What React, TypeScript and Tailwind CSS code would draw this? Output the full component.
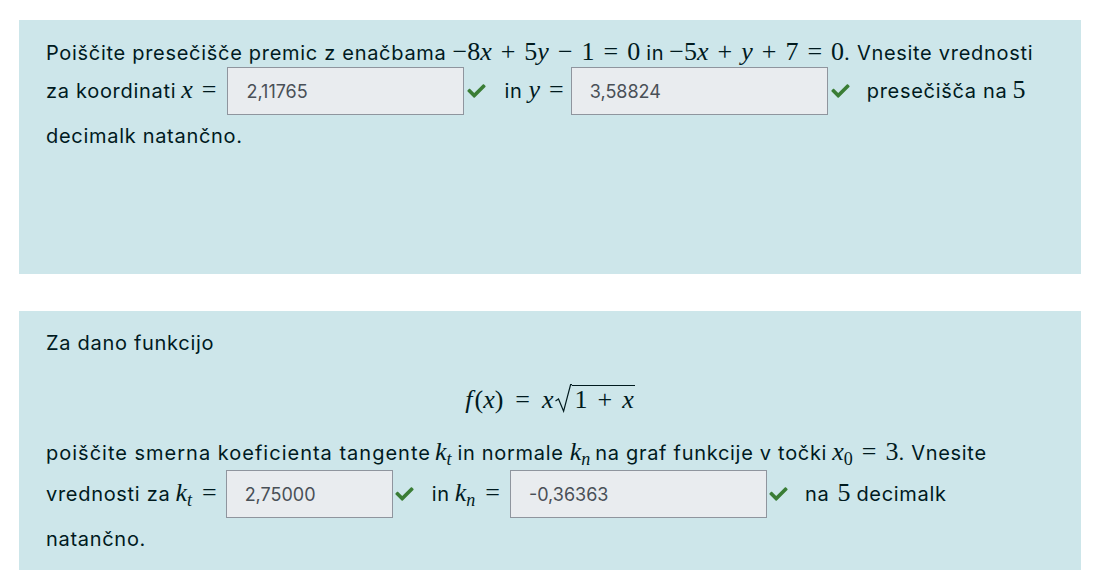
import type { ReactNode } from 'react';

// math set in a Times-like face, standing in for the TeX fonts
function M({ children, className = '' }: { children: ReactNode; className?: string }) {
  return (
    <span className={`font-['Liberation_Serif',serif] text-[26px] leading-none tracking-normal whitespace-nowrap ${className}`}>
      {children}
    </span>
  );
}

function V({ children }: { children: ReactNode }) {
  return <i className="italic">{children}</i>;
}

function Op({ children, gap = 'mx-[9px]' }: { children: ReactNode; gap?: string }) {
  return <span className={gap}>{children}</span>;
}

function Sub({ children, italic = true }: { children: ReactNode; italic?: boolean }) {
  return <span className={`relative top-[5px] text-[18px] ${italic ? 'italic' : ''}`}>{children}</span>;
}

function T({ children, className = '' }: { children: ReactNode; className?: string }) {
  return <span className={`whitespace-nowrap ${className}`}>{children}</span>;
}

function Check({ className = '' }: { className?: string }) {
  return (
    <svg viewBox="0 60 512 392" className={`w-[19px] h-[14px] flex-none ${className}`} aria-label="Pravilno">
      <path
        fill="#3a7d35"
        d="M173.898 439.404l-166.4-166.4c-9.997-9.997-9.997-26.206 0-36.204l36.203-36.204c9.997-9.998 26.207-9.998 36.204 0L192 312.69 432.095 72.596c9.997-9.997 26.207-9.997 36.204 0l36.203 36.204c9.997 9.997 9.997 26.206 0 36.204l-294.4 294.401c-9.998 9.997-26.207 9.997-36.204-.001z"
      />
    </svg>
  );
}

function Answer({ value, width, className = '' }: { value: string; width: string; className?: string }) {
  return (
    <input
      readOnly
      value={value}
      className={`${width} h-[48px] flex-none border border-[#8f959e] bg-[#e9ecef] pl-[18px] font-['Inter'] text-[18px] tracking-normal text-[#495057] outline-none ${className}`}
    />
  );
}

export default function App() {
  return (
    <div className="min-h-screen bg-white pl-[19px] pt-[20px] font-['Inter',sans-serif] text-[20px] tracking-[0.7px] text-[#001a1e]">
      {/* first question */}
      <div className="w-[1062px] h-[254px] bg-[#cde6ea] pl-[27px] pt-[18px]">
        <div className="flex items-baseline leading-[30px]">
          <T>Poiščite presečišče premic z enačbama</T>
          <M className="ml-[6px]">
            −8<V>x</V>
            <Op>+</Op>5<V>y</V>
            <Op>−</Op>1<Op>=</Op>0
          </M>
          <T className="ml-[6px]">in</T>
          <M className="ml-[5px]">
            −5<V>x</V>
            <Op>+</Op>
            <V>y</V>
            <Op>+</Op>7<Op>=</Op>0
          </M>
          <T>. Vnesite vrednosti</T>
        </div>
        <div className="flex items-center h-[48px] mt-[-1px]">
          <span className="flex items-baseline leading-[24px] pb-[2px]">
            <T>za koordinati</T>
            <M className="ml-[5px]">
              <V>x</V>
              <span className="ml-[9px]">=</span>
            </M>
          </span>
          <Answer value="2,11765" width="w-[237px]" className="ml-[11px]" />
          <Check className="ml-[3px]" />
          <span className="flex items-baseline leading-[24px] pb-[2px] ml-[18px]">
            <T>in</T>
            <M className="ml-[6px]">
              <V>y</V>
              <span className="ml-[9px]">=</span>
            </M>
          </span>
          <Answer value="3,58824" width="w-[257px]" className="ml-[7px]" />
          <Check className="ml-[3px]" />
          <span className="flex items-baseline leading-[24px] pb-[2px] ml-[17px]">
            <T>presečišča na</T>
            <M className="ml-[5px]">5</M>
          </span>
        </div>
        <div className="leading-[30px] mt-[6px]">
          <T>decimalk natančno.</T>
        </div>
      </div>

      {/* second question */}
      <div className="w-[1062px] h-[259px] mt-[37px] bg-[#cde6ea] pl-[27px] pt-[17px]">
        <div className="leading-[30px]">
          <T>Za dano funkcijo</T>
        </div>
        <div className="leading-[30px] mt-[26px] text-center pr-[27px]">
          <M>
            <span className="mr-[2px]">
              <V>f</V>
            </span>
            (<V>x</V>)<Op gap="mx-[12px]">=</Op>
            <V>x</V>
            <svg viewBox="0 0 17 29" className="inline-block w-[17px] h-[29px] align-[-5px] ml-[1px]">
              <path d="M0.5 17 L3.5 15 L8.6 27.2 L15.6 0.7 L17 0.7" fill="none" stroke="#001a1e" strokeWidth="1.2" />
            </svg>
            <span className="inline-block border-t border-[#001a1e] pt-[1px] pl-[3px] pr-[1px] leading-none">
              1<Op gap="mx-[10px]">+</Op>
              <V>x</V>
            </span>
          </M>
        </div>
        <div className="flex items-baseline leading-[30px] mt-[22px]">
          <T className="tracking-[1px]">poiščite smerna koeficienta tangente</T>
          <M className="ml-[4px]">
            <V>k</V>
            <Sub>t</Sub>
          </M>
          <T className="ml-[6px]">in normale</T>
          <M className="ml-[6px]">
            <V>k</V>
            <Sub>n</Sub>
          </M>
          <T className="ml-[5px]">na graf funkcije v točki</T>
          <M className="ml-[5px]">
            <V>x</V>
            <Sub italic={false}>0</Sub>
            <Op>=</Op>3
          </M>
          <T>. Vnesite</T>
        </div>
        <div className="flex items-center h-[48px] mt-[2px]">
          <span className="flex items-baseline leading-[24px] pb-[2px]">
            <T>vrednosti za</T>
            <M className="ml-[5px]">
              <V>k</V>
              <Sub>t</Sub>
              <span className="ml-[10px]">=</span>
            </M>
          </span>
          <Answer value="2,75000" width="w-[167px]" className="ml-[9px]" />
          <Check className="ml-[2px]" />
          <span className="flex items-baseline leading-[24px] pb-[2px] ml-[18px]">
            <T>in</T>
            <M className="ml-[5px]">
              <V>k</V>
              <Sub>n</Sub>
              <span className="ml-[10px]">=</span>
            </M>
          </span>
          <Answer value="-0,36363" width="w-[257px]" className="ml-[10px]" />
          <Check className="ml-[2px]" />
          <span className="flex items-baseline leading-[24px] pb-[2px] ml-[17px]">
            <T>na</T>
            <M className="ml-[8px]">5</M>
            <T className="ml-[6px]">decimalk</T>
          </span>
        </div>
        <div className="leading-[30px] mt-[6px]">
          <T>natančno.</T>
        </div>
      </div>
    </div>
  );
}
